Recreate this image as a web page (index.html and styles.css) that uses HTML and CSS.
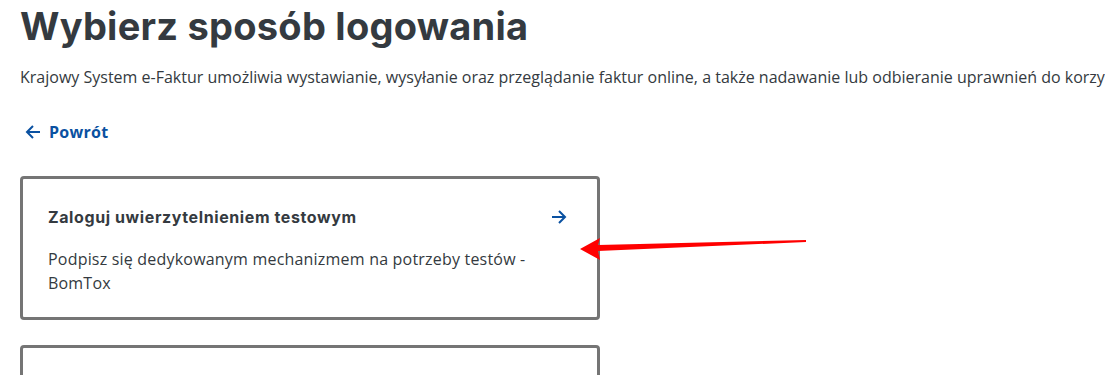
FILE: index.html
```html
<!DOCTYPE html>
<html lang="pl">
<head>
    <meta charset="UTF-8">
    <title>Wybierz sposób logowania</title>
    <link rel="stylesheet" href="styles.css">
</head>
<body>
    <div class="page">
        <h1>Wybierz sposób logowania</h1>
        <p class="lead">Krajowy System e-Faktur umożliwia wystawianie, wysyłanie oraz przeglądanie faktur online, a także nadawanie lub odbieranie uprawnień do korzystania z systemu.</p>

        <a href="#" class="back">
            <svg width="18" height="18" viewBox="0 0 18 18" fill="none" stroke="currentColor" stroke-width="2">
                <path d="M16 9H3M9 3L3 9l6 6"/>
            </svg>
            Powrót
        </a>

        <div class="options">
            <a href="#" class="card">
                <div class="card-head">
                    <h3>Zaloguj uwierzytelnieniem testowym</h3>
                    <svg class="go" width="18" height="18" viewBox="0 0 18 18" fill="none" stroke="currentColor" stroke-width="2">
                        <path d="M2 9h13M9 3l6 6-6 6"/>
                    </svg>
                </div>
                <p>Podpisz się dedykowanym mechanizmem na potrzeby testów - BomTox</p>
            </a>
            <a href="#" class="card"></a>
        </div>
    </div>

    <!-- annotation arrow from the screenshot -->
    <svg class="pointer" width="240" height="30" viewBox="0 0 240 30">
        <polygon points="0,16 20,5 18,12 226,7 226,9 18,18 20,27" fill="#ff0000"/>
    </svg>
</body>
</html>
```

FILE: styles.css
```css
* {
    margin: 0;
    padding: 0;
    box-sizing: border-box;
}

body {
    font-family: "Open Sans", Arial, sans-serif;
    color: #343a40;
    background: #fff;
    overflow: hidden;
    position: relative;
    height: 375px;
}

.page {
    padding: 0 20px;
}

h1 {
    font-family: Inter, "Open Sans", sans-serif;
    font-weight: 700;
    font-size: 38px;
    line-height: 52px;
    letter-spacing: 0.25px;
    color: #343a40;
}

.lead {
    font-size: 16px;
    line-height: 24px;
    margin-top: 13px;
    white-space: nowrap;
}

.back {
    display: inline-flex;
    align-items: center;
    gap: 7px;
    margin-top: 31px;
    margin-left: 4px;
    color: #0a51a1;
    font-weight: 700;
    font-size: 16px;
    line-height: 24px;
    letter-spacing: 0.3px;
    text-decoration: none;
}

.options {
    width: 580px;
    margin-top: 30px;
    display: flex;
    flex-direction: column;
    gap: 25px;
}

.card {
    display: block;
    border: 3px solid #757575;
    border-radius: 4px;
    padding: 25px 25px 22px 25px;
    text-decoration: none;
    color: #343a40;
    min-height: 144px;
}

.card-head {
    display: flex;
    justify-content: space-between;
    align-items: center;
}

.card h3 {
    font-family: Inter, "Open Sans", sans-serif;
    font-weight: 700;
    font-size: 16px;
    line-height: 26px;
    letter-spacing: 0.6px;
}

.go {
    color: #0a51a1;
    margin-right: 4px;
}

.card p {
    margin-top: 17px;
    font-size: 16px;
    line-height: 24px;
    letter-spacing: 0.2px;
    color: #343a40;
}

.pointer {
    position: absolute;
    left: 580px;
    top: 233px;
}
```
